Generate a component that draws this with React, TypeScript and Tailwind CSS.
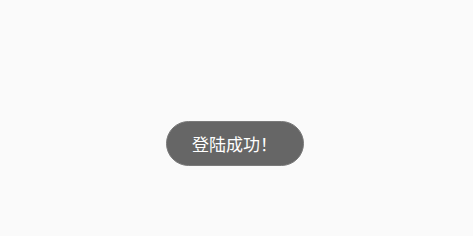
export default function App() {
  return (
    <div className="flex h-[236px] w-full justify-center bg-[#fafafa] pt-[121px] font-['Noto_Sans_CJK_SC',sans-serif]">
      <div className="mr-[4px] flex h-[45px] w-[138px] items-center justify-center rounded-full border border-[#7a7a7a] bg-[#666666] text-[17px] text-white">
        登陆成功！
      </div>
    </div>
  );
}
